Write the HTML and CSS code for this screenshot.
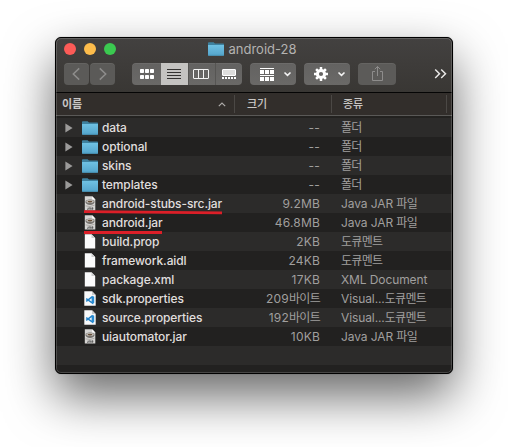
FILE: index.html
```html
<!DOCTYPE html>
<html lang="ko">
<head>
<meta charset="utf-8">
<title>android-28</title>
<link rel="stylesheet" href="styles.css">
</head>
<body>
<svg class="defs" width="0" height="0" aria-hidden="true">
  <defs>
    <linearGradient id="blue" x1="0" y1="0" x2="0" y2="1"><stop offset="0" stop-color="#6fc1e3"/><stop offset="1" stop-color="#54a5cc"/></linearGradient>
    <symbol id="folder" viewBox="0 0 16 14"><path d="M0 1.2Q0 .3 .8 .3H5.6L7 1.5H15.3Q16 1.5 16 2.2V5H0Z" fill="#3e819f"/><path d="M0 3H16V13Q16 13.8 15.2 13.8H.8Q0 13.8 0 13Z" fill="url(#blue)"/><path d="M0 13.3H16" stroke="#4692b5" stroke-width=".7"/></symbol>
    <symbol id="doc" viewBox="0 0 12 15"><path d="M.8 .3H7.5L11.2 4V14.6H.8Z" fill="#fbfbfb"/><path d="M7.5 .3V4H11.2Z" fill="#cfcfcf"/></symbol>
    <symbol id="jar" viewBox="0 0 12 15"><path d="M.8 .3H8.2L11.3 3.5V14.6H.8Z" fill="#d6d5d3"/><path d="M8.2 .3V3.5H11.3Z" fill="#fff"/><path d="M1.6 4.8Q6 2 10.4 4.8V6.6Q9.6 9 6 9Q2.4 9 1.6 6.6Z" fill="#77736f"/><ellipse cx="6" cy="5.4" rx="3.6" ry="1.2" fill="#e3dfda"/><ellipse cx="6" cy="5.6" rx="2.6" ry=".8" fill="#675039"/><path d="M1.5 9.9Q6 11.4 10.5 9.2" fill="none" stroke="#aaa7a3" stroke-width=".9"/><path d="M4.2 11.6V13.3H3M5.2 13.7V11.8H6.6V13.7M7.8 13.7V11.8H9V12.7H8L9.2 13.7" fill="none" stroke="#555" stroke-width=".8"/></symbol>
    <symbol id="code" viewBox="0 0 12 15"><path d="M.3 .3H8L11.7 4V14.7H.3Z" fill="#f8f9fa"/><path d="M8 .3V4H11.7Z" fill="#ccc"/><path d="M8.4 5.7V12.1L2.2 7.6M8.4 5.7L2.2 10.4" fill="none" stroke="#2583c8" stroke-width="1.5"/><path d="M8.1 4.8L10.2 5.7V12L8.1 12.9Z" fill="#2b8dd3"/></symbol>
    <symbol id="tri" viewBox="0 0 8 10"><path d="M.4 .6L7.6 5L.4 9.4Z" fill="#9b9a99"/></symbol>
  </defs>
</svg>
<main class="window">
  <header class="chrome">
    <div class="titlebar">
      <div class="lights"><i class="light red"></i><i class="light yellow"></i><i class="light green"></i></div>
      <div class="title"><svg class="folder"><use href="#folder"/></svg><span>android-28</span></div>
    </div>
    <div class="toolbar">
      <div class="nav">
        <button class="btn navbtn"><svg width="25" height="22"><path d="M15.2 5.4L9.3 11L15.2 16.6"/></svg></button>
        <button class="btn navbtn"><svg width="25" height="22"><path d="M9.8 5.4L15.7 11L9.8 16.6"/></svg></button>
      </div>
      <div class="views btn">
        <span class="seg"><svg width="14" height="10" fill="#fff"><rect width="4" height="4" rx=".7"/><rect x="5" width="4" height="4" rx=".7"/><rect x="10" width="4" height="4" rx=".7"/><rect y="6" width="4" height="4" rx=".7"/><rect x="5" y="6" width="4" height="4" rx=".7"/><rect x="10" y="6" width="4" height="4" rx=".7"/></svg></span>
        <span class="seg active"><svg width="14" height="10" fill="#343332"><rect width="14" height="1"/><rect y="3" width="14" height="1"/><rect y="6" width="14" height="1"/><rect y="9" width="14" height="1"/></svg></span>
        <span class="seg"><svg width="16" height="10" fill="none" stroke="#f4f4f4"><rect x=".5" y=".5" width="15" height="9" rx=".5"/><path d="M5.5 0V10M10.5 0V10"/></svg></span>
        <span class="seg"><svg width="14" height="10" fill="#fff"><rect x=".5" y=".5" width="13" height="6" rx=".5" fill="#dededd" stroke="#fff"/><path d="M0 8H2V10H0ZM3 8H5V10H3ZM6 8H8V10H6ZM9 8H11V10H9ZM12 8H14V10H12Z"/></svg></span>
      </div>
      <button class="btn menu"><svg width="46" height="22" fill="#fff"><path d="M10 5H24V6H10ZM10 12H24V13H10ZM10 7H14V11H10ZM15 7H19V11H15ZM20 7H24V11H20ZM10 14H14V18H10ZM15 14H19V18H15ZM20 14H24V18H20Z"/><path class="arrow" d="M34.5 9.5L37.5 12.4L40.5 9.5"/></svg></button>
      <button class="btn menu"><svg width="46" height="22"><g transform="translate(17 11)"><circle r="3.6" fill="none" stroke="#fff" stroke-width="3"/><path d="M0-7V-4M0 7V4M-7 0H-4M7 0H4M-4.9-4.9L-3-3M4.9 4.9L3 3M-4.9 4.9L-3 3M4.9-4.9L3-3" stroke="#fff" stroke-width="2.5"/></g><path class="arrow" d="M34.5 9.5L37.5 12.4L40.5 9.5"/></svg></button>
      <button class="btn share"><svg width="38" height="22" fill="none" stroke="#8e8d8c"><path d="M17 8.5H14.5V17.5H24.5V8.5H22M19.5 13V3.5M16.8 6.2L19.5 3.5L22.2 6.2"/></svg></button>
      <svg class="more" width="13" height="12"><path d="M1.2 1.5L5.5 5.7L1.2 10M7.2 1.5L11.5 5.7L7.2 10"/></svg>
    </div>
  </header>
  <div class="columns">
    <div class="col c-name">이름<svg width="8" height="5"><path d="M.8 4.2L4 1L7.2 4.2"/></svg></div><div class="col c-size">크기</div><div class="col c-kind">종류</div>
  </div>
  <section class="list">
    <div class="row"><svg class="tri"><use href="#tri"/></svg><svg class="folder"><use href="#folder"/></svg><span class="name">data</span><span class="size">--</span><span class="kind"><b>폴더</b></span></div>
    <div class="row"><svg class="tri"><use href="#tri"/></svg><svg class="folder"><use href="#folder"/></svg><span class="name">optional</span><span class="size">--</span><span class="kind"><b>폴더</b></span></div>
    <div class="row"><svg class="tri"><use href="#tri"/></svg><svg class="folder"><use href="#folder"/></svg><span class="name">skins</span><span class="size">--</span><span class="kind"><b>폴더</b></span></div>
    <div class="row"><svg class="tri"><use href="#tri"/></svg><svg class="folder"><use href="#folder"/></svg><span class="name">templates</span><span class="size">--</span><span class="kind"><b>폴더</b></span></div>
    <div class="row"><svg class="file"><use href="#jar"/></svg><span class="name">android-stubs-src.jar</span><span class="size">9.2MB</span><span class="kind">Java JAR <b>파일</b></span><svg class="mark" width="140" height="5"><path d="M1 1.7L139 2.8" /></svg></div>
    <div class="row"><svg class="file"><use href="#jar"/></svg><span class="name">android.jar</span><span class="size">46.8MB</span><span class="kind">Java JAR <b>파일</b></span><svg class="mark low" width="80" height="5"><path d="M1 2.5H79" /></svg></div>
    <div class="row"><svg class="file"><use href="#doc"/></svg><span class="name">build.prop</span><span class="size">2KB</span><span class="kind"><b>도큐멘트</b></span></div>
    <div class="row"><svg class="file"><use href="#doc"/></svg><span class="name">framework.aidl</span><span class="size">24KB</span><span class="kind"><b>도큐멘트</b></span></div>
    <div class="row"><svg class="file"><use href="#doc"/></svg><span class="name">package.xml</span><span class="size">17KB</span><span class="kind">XML Document</span></div>
    <div class="row"><svg class="file"><use href="#code"/></svg><span class="name">sdk.properties</span><span class="size">209<b>바이트</b></span><span class="kind">Visual...<b>도큐멘트</b></span></div>
    <div class="row"><svg class="file"><use href="#code"/></svg><span class="name">source.properties</span><span class="size">192<b>바이트</b></span><span class="kind">Visual...<b>도큐멘트</b></span></div>
    <div class="row"><svg class="file"><use href="#jar"/></svg><span class="name">uiautomator.jar</span><span class="size">10KB</span><span class="kind">Java JAR <b>파일</b></span></div>
    <div class="row"></div>
    <div class="row last"></div>
  </section>
</main>
</body>
</html>
```
FILE: styles.css
```css
* { box-sizing: border-box; }
body { margin: 0; padding: 37px 55px 0; height: 447px; overflow: hidden; background: #fff; font-family: Inter, "Noto Sans CJK KR", sans-serif; font-size: 12px; font-weight: 500; }
.defs { position: absolute; }
svg { display: block; flex: none; }
.window { position: relative; width: 398px; height: 337px; border: 1px solid #000; border-radius: 6px; background: #232220; overflow: hidden; box-shadow: 0 22px 50px rgba(0,0,0,.6), 0 0 1px rgba(0,0,0,.5); }
.window::after { content: ""; position: absolute; inset: 0; border: 1px solid rgba(255,255,255,.17); border-radius: 5px; pointer-events: none; }
.chrome { height: 55px; background: linear-gradient(#434140, #393734); border-bottom: 1px solid #050505; }
.titlebar { height: 25px; position: relative; display: flex; align-items: center; justify-content: center; }
.lights { position: absolute; left: 8px; top: 5px; display: flex; gap: 8px; }
.light { width: 12px; height: 12px; border-radius: 50%; }
.red { background: #fc5b57; }
.yellow { background: #fdbc4b; }
.green { background: #3bc950; }
.title { display: flex; align-items: center; gap: 4px; color: #b4b3b1; font-size: 13px; font-weight: 400; line-height: 18px; letter-spacing: 0; margin: -3px 3px 0 0; }
.folder { width: 16px; height: 14px; }
.toolbar { display: flex; height: 22px; padding-left: 8px; }
.btn { height: 22px; padding: 0; border: 0; border-radius: 4px; background: linear-gradient(#636261, #6a6967); box-shadow: inset 0 1px rgba(255,255,255,.06); overflow: hidden; }
.nav { display: flex; gap: 1px; margin-right: 17px; }
.navbtn { width: 25px; background: #5b5a58; }
.navbtn path { fill: none; stroke: #8d8c8b; stroke-width: 1.5; }
.views { display: flex; width: 110px; margin-right: 8px; }
.seg { display: flex; flex: 1; align-items: center; justify-content: center; border-left: 1px solid #565553; }
.seg:first-child { flex: 0 0 29px; border: 0; padding-left: 1px; }
.seg.active { background: #c4c3c1; border-color: #c4c3c1; padding-right: 1px; }
.seg:nth-child(3) { padding-right: 2px; }
.seg:nth-child(4) { padding-right: 1px; }
.menu { width: 46px; margin-right: 8px; }
.arrow { fill: none; stroke: #f4f4f4; stroke-width: 1.6; }
.share { width: 38px; background: #5c5b59; }
.more { margin: 5px 0 0 38px; }
.more path { fill: none; stroke: #e6e5e4; stroke-width: 1.5; }
.columns { display: flex; height: 23px; padding-top: 2px; background: #322e2b; border-bottom: 1px solid #5a5957; color: #c9c7c5; font-size: 11px; line-height: 18px; }
.col { height: 18px; border-right: 1px solid #4b4845; }
.c-name { width: 179px; display: flex; align-items: center; justify-content: space-between; padding: 0 8px 0 6px; font-weight: 700; }
.c-name path { fill: none; stroke: #aaa8a6; stroke-width: 1.2; }
.c-size { width: 97px; padding-left: 12px; }
.c-kind { width: 115px; padding-left: 11px; }
.list { padding-top: 2px; }
.row { position: relative; display: flex; align-items: center; height: 19px; background: #2c2b2a; line-height: 19px; color: #e0dfde; white-space: nowrap; }
.row:nth-child(even) { background: #222120; }
.row b { font-weight: 400; letter-spacing: -.7px; }
.row .folder { margin: 0 4px 0 9px; }
.tri { width: 8px; height: 10px; margin-left: 9px; }
.file { width: 12px; height: 15px; margin: 0 6px 0 28px; }
.name { width: 140px; letter-spacing: -.1px; }
.size { width: 78px; text-align: right; color: #a09f9e; font-weight: 400; letter-spacing: .2px; }
.kind { margin-left: 21px; color: #a09f9e; font-weight: 400; letter-spacing: -.1px; }
.mark { position: absolute; left: 27px; top: 16px; z-index: 1; }
.mark.low { top: 17px; }
.mark path { fill: none; stroke: #dc1f28; stroke-width: 2.8; }
.last { height: 8px; }
```
